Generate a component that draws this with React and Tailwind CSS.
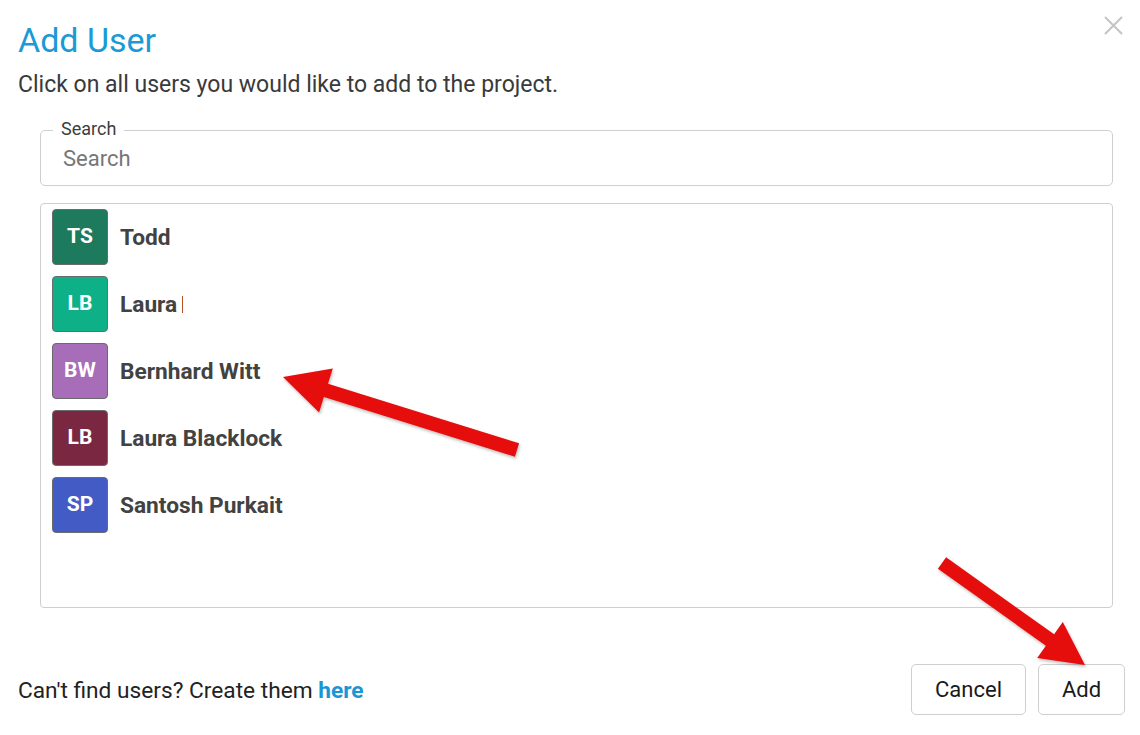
import React from "react";

function arrowPoints(tip, tail, headLen, headHalf, shaftHalf) {
  const dx = tail[0] - tip[0];
  const dy = tail[1] - tip[1];
  const len = Math.hypot(dx, dy);
  const ux = dx / len, uy = dy / len;
  const px = -uy, py = ux;
  const bx = tip[0] + ux * headLen, by = tip[1] + uy * headLen;
  const pts = [
    [tip[0], tip[1]],
    [bx + px * headHalf, by + py * headHalf],
    [bx + px * shaftHalf, by + py * shaftHalf],
    [tail[0] + px * shaftHalf, tail[1] + py * shaftHalf],
    [tail[0] - px * shaftHalf, tail[1] - py * shaftHalf],
    [bx - px * shaftHalf, by - py * shaftHalf],
    [bx - px * headHalf, by - py * headHalf],
  ];
  return pts.map((p) => p[0].toFixed(1) + "," + p[1].toFixed(1)).join(" ");
}

const users = [
  { i: "TS", name: "Todd", bg: "bg-[#1d7a5c]", cursor: false },
  { i: "LB", name: "Laura", bg: "bg-[#0db087]", cursor: true },
  { i: "BW", name: "Bernhard Witt", bg: "bg-[#a76db8]", cursor: false },
  { i: "LB", name: "Laura Blacklock", bg: "bg-[#7a2841]", cursor: false },
  { i: "SP", name: "Santosh Purkait", bg: "bg-[#435cc5]", cursor: false },
];

export default function App() {
  return (
    <div className="relative w-[1140px] h-[735px] bg-white overflow-hidden [font-family:Roboto,sans-serif]">
      {/* close */}
      <button className="absolute left-[1103px] top-[15px] w-[21px] h-[21px]">
        <svg width="21" height="21" viewBox="0 0 21 21">
          <path d="M2 2 L19 19 M19 2 L2 19" stroke="#c4c4c4" strokeWidth="2" />
        </svg>
      </button>

      <div className="flex flex-col pl-[18px] pt-[20px]">
        <h1 className="text-[34px] leading-[40px] text-[#1b9ad6] font-normal">Add User</h1>
        <p className="mt-[11px] text-[23px] leading-[28px] text-[#3a3a3a]">
          Click on all users you would like to add to the project.
        </p>

        {/* search */}
        <div className="relative ml-[22px] mt-[31px] w-[1073px] h-[56px] border border-[#cfcfcf] rounded-[5px] flex items-center pl-[22px]">
          <span className="absolute left-[12px] top-[-13px] px-[8px] bg-white text-[18px] leading-[22px] text-[#3d3d3d]">
            Search
          </span>
          <span className="text-[22px] leading-[28px] text-[#767676] mt-[2px]">Search</span>
        </div>

        {/* list */}
        <div className="ml-[22px] mt-[17px] w-[1073px] h-[405px] border border-[#cfcfcf] rounded-[4px] pt-[5px] pl-[11px] flex flex-col gap-[11px]">
          {users.map((u, idx) => (
            <div key={idx} className="flex items-center gap-[12px] h-[56px]">
              <div
                className={`w-[56px] h-[56px] rounded-[4px] border border-[#6b6b6b] ${u.bg} flex items-center justify-center text-white font-bold text-[21px]`}
              >
                {u.i}
              </div>
              <span className="mt-[2px] text-[22.7px] font-bold text-[#424242] flex items-center">
                {u.name}
                {u.cursor && <span className="ml-[5px] inline-block w-[1px] h-[17px] bg-[#b5532a]" />}
              </span>
            </div>
          ))}
        </div>

        {/* footer */}
        <div className="mt-[56px] flex items-center justify-between pr-[15px]">
          <span className="mt-[4px] text-[22.7px] text-[#222]">
            Can't find users? Create them <span className="font-bold text-[#1b96d4]">here</span>
          </span>
          <div className="flex gap-[12px]">
            <button className="h-[51px] w-[115px] border border-[#cfcfcf] rounded-[5px] text-[22px] text-[#1a1a1a] bg-white">
              Cancel
            </button>
            <button className="h-[51px] w-[87px] border border-[#cfcfcf] rounded-[5px] text-[22px] text-[#1a1a1a] bg-white">
              Add
            </button>
          </div>
        </div>
      </div>

      {/* annotation arrows */}
      <svg className="absolute inset-0 pointer-events-none" width="1140" height="735">
        <defs>
          <filter id="sh" x="-10%" y="-10%" width="130%" height="130%">
            <feDropShadow dx="1" dy="2" stdDeviation="1.5" floodColor="#000" floodOpacity="0.25" />
          </filter>
        </defs>
        <polygon
          points={arrowPoints([283, 377], [517, 450], 45, 23, 7)}
          fill="#e60a0a"
          filter="url(#sh)"
        />
        <polygon
          points={arrowPoints([1085, 665], [942, 563], 43, 22, 7)}
          fill="#e60a0a"
          filter="url(#sh)"
        />
      </svg>
    </div>
  );
}
